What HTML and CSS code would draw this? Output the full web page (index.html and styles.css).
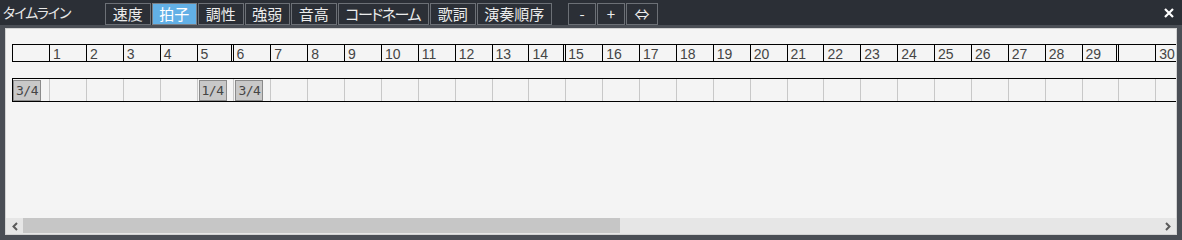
FILE: index.html
```html
<!DOCTYPE html>
<html lang="ja">
<head>
<meta charset="utf-8">
<title>タイムライン</title>
<link rel="stylesheet" href="styles.css">
</head>
<body>
<div class="window">
  <header class="titlebar">
    <span class="title">タイムライン</span>
    <nav class="tabs">
      <span class="tab">速度</span>
      <span class="tab active">拍子</span>
      <span class="tab">調性</span>
      <span class="tab">強弱</span>
      <span class="tab">音高</span>
      <span class="tab kana">コードネーム</span>
      <span class="tab">歌詞</span>
      <span class="tab">演奏順序</span>
    </nav>
    <nav class="tools">
      <span class="tool">-</span>
      <span class="tool">+</span>
      <span class="tool wide">⇔</span>
    </nav>
    <span class="close">
      <svg width="10" height="10" viewBox="0 0 10 10"><path d="M1 1 L9 9 M9 1 L1 9" stroke="#fff" stroke-width="2.2" fill="none"/></svg>
    </span>
  </header>
  <div class="frame">
    <div class="panel">
      <div class="canvas">
        <div class="ruler">
          <div class="beat first"></div>
          <div class="beat">1</div>
          <div class="beat">2</div>
          <div class="beat">3</div>
          <div class="beat">4</div>
          <div class="beat">5</div>
          <div class="beat bar">6</div>
          <div class="beat">7</div>
          <div class="beat">8</div>
          <div class="beat">9</div>
          <div class="beat">10</div>
          <div class="beat">11</div>
          <div class="beat">12</div>
          <div class="beat">13</div>
          <div class="beat">14</div>
          <div class="beat bar">15</div>
          <div class="beat">16</div>
          <div class="beat">17</div>
          <div class="beat">18</div>
          <div class="beat">19</div>
          <div class="beat">20</div>
          <div class="beat">21</div>
          <div class="beat">22</div>
          <div class="beat">23</div>
          <div class="beat">24</div>
          <div class="beat">25</div>
          <div class="beat">26</div>
          <div class="beat">27</div>
          <div class="beat">28</div>
          <div class="beat">29</div>
          <div class="beat bar"></div>
          <div class="beat">30</div>
          <div class="beat"></div>
        </div>
        <div class="track">
          <div class="slot first"><span class="sig">3/4</span></div>
          <div class="slot"></div>
          <div class="slot"></div>
          <div class="slot"></div>
          <div class="slot"></div>
          <div class="slot"><span class="sig">1/4</span></div>
          <div class="slot"><span class="sig">3/4</span></div>
          <div class="slot"></div>
          <div class="slot"></div>
          <div class="slot"></div>
          <div class="slot"></div>
          <div class="slot"></div>
          <div class="slot"></div>
          <div class="slot"></div>
          <div class="slot"></div>
          <div class="slot"></div>
          <div class="slot"></div>
          <div class="slot"></div>
          <div class="slot"></div>
          <div class="slot"></div>
          <div class="slot"></div>
          <div class="slot"></div>
          <div class="slot"></div>
          <div class="slot"></div>
          <div class="slot"></div>
          <div class="slot"></div>
          <div class="slot"></div>
          <div class="slot"></div>
          <div class="slot"></div>
          <div class="slot"></div>
          <div class="slot"></div>
          <div class="slot"></div>
          <div class="slot"></div>
        </div>
      </div>
      <div class="hscroll">
        <span class="arrow">
          <svg width="8" height="9" viewBox="0 0 8 9"><path d="M6 1 L2.5 4.5 L6 8" stroke="#5a5a5a" stroke-width="2" fill="none"/></svg>
        </span>
        <div class="trough"><div class="thumb"></div></div>
        <span class="arrow">
          <svg width="8" height="9" viewBox="0 0 8 9"><path d="M2 1 L5.5 4.5 L2 8" stroke="#5a5a5a" stroke-width="2" fill="none"/></svg>
        </span>
      </div>
    </div>
  </div>
</div>
</body>
</html>
```
FILE: styles.css
```css
html, body {
  margin: 0;
  padding: 0;
}
body {
  width: 1182px;
  height: 240px;
  overflow: hidden;
  background: #4a4e55;
}
.window {
  display: flex;
  flex-direction: column;
  height: 240px;
}
.titlebar {
  height: 25px;
  flex: none;
  display: flex;
  align-items: flex-start;
  background: #2b2f36;
  color: #e8e8e8;
  font-family: "Noto Sans CJK JP", "Noto Sans", sans-serif;
  font-feature-settings: "palt";
}
.title {
  width: 102px;
  padding-left: 3px;
  font-size: 14px;
  line-height: 25px;
  letter-spacing: -1px;
}
.tabs {
  display: flex;
  gap: 1px;
  margin-top: 3px;
}
.tab, .tool {
  display: block;
  height: 22px;
  box-sizing: border-box;
  border: 1px solid #6c7076;
  padding: 0 6.75px;
  font-size: 15px;
  line-height: 20px;
  color: #ececec;
  background: #2b2f36;
}
.tab.kana {
  letter-spacing: -1.5px;
  padding-right: 8px;
}
.tab.active {
  background: #62b0e6;
  color: #fff;
  border-color: #7a7e84;
}
.tools {
  display: flex;
  gap: 1px;
  margin-top: 3px;
  margin-left: 16px;
}
.tool {
  width: 28px;
  padding: 0;
  text-align: center;
}
.tool.wide {
  width: 32px;
}
.close {
  margin-left: auto;
  margin-right: 8px;
  margin-top: 8px;
  display: flex;
}
.frame {
  flex: none;
  padding: 3px 5px 5px 5px;
}
.panel {
  height: 207px;
  box-sizing: border-box;
  border: 1px solid #d2d2d2;
  background: #f4f4f4;
  display: flex;
  flex-direction: column;
  overflow: hidden;
}
.canvas {
  height: 189px;
  flex: none;
  overflow: hidden;
  padding: 15px 0 0 6px;
  box-sizing: border-box;
}
.ruler, .track {
  display: flex;
  box-sizing: border-box;
  border-top: 1px solid #000;
  border-bottom: 1px solid #000;
  border-left: 1px solid #000;
  width: 1300px;
}
.ruler {
  height: 18px;
  font-family: "Liberation Sans", Arial, sans-serif;
  font-size: 14px;
  color: #444;
}
.beat {
  flex: none;
  width: 36.89px;
  height: 16px;
  box-sizing: border-box;
  border-left: 1px solid #000;
  padding: 2px 0 0 3px;
  line-height: 15px;
}
.beat.first, .slot.first {
  width: 36px;
  border-left: none;
}
.beat.bar {
  width: 38.89px;
  margin-left: -2px;
  border-left: 3px double #000;
  padding-left: 2px;
}
.track {
  height: 24px;
  margin-top: 16px;
}
.slot {
  flex: none;
  width: 36.89px;
  height: 22px;
  box-sizing: border-box;
  border-left: 1px solid #c8c8c8;
}
.sig {
  display: block;
  width: 28px;
  height: 21px;
  box-sizing: border-box;
  margin: 1px 0 0 1px;
  background: #c8c8c8;
  border: 1px solid #8a8a8a;
  font-family: "DejaVu Sans Mono", "Liberation Mono", monospace;
  font-size: 13px;
  line-height: 19px;
  text-align: center;
  color: #454545;
  letter-spacing: -0.5px;
}
.slot.first .sig {
  margin-left: 0;
}
.hscroll {
  height: 16px;
  flex: none;
  display: flex;
  background: #e6e6e6;
}
.arrow {
  width: 17px;
  flex: none;
  display: flex;
  align-items: center;
  justify-content: center;
}
.trough {
  flex: 1;
}
.thumb {
  width: 597px;
  height: 15px;
  background: #c6c6c6;
}
```
